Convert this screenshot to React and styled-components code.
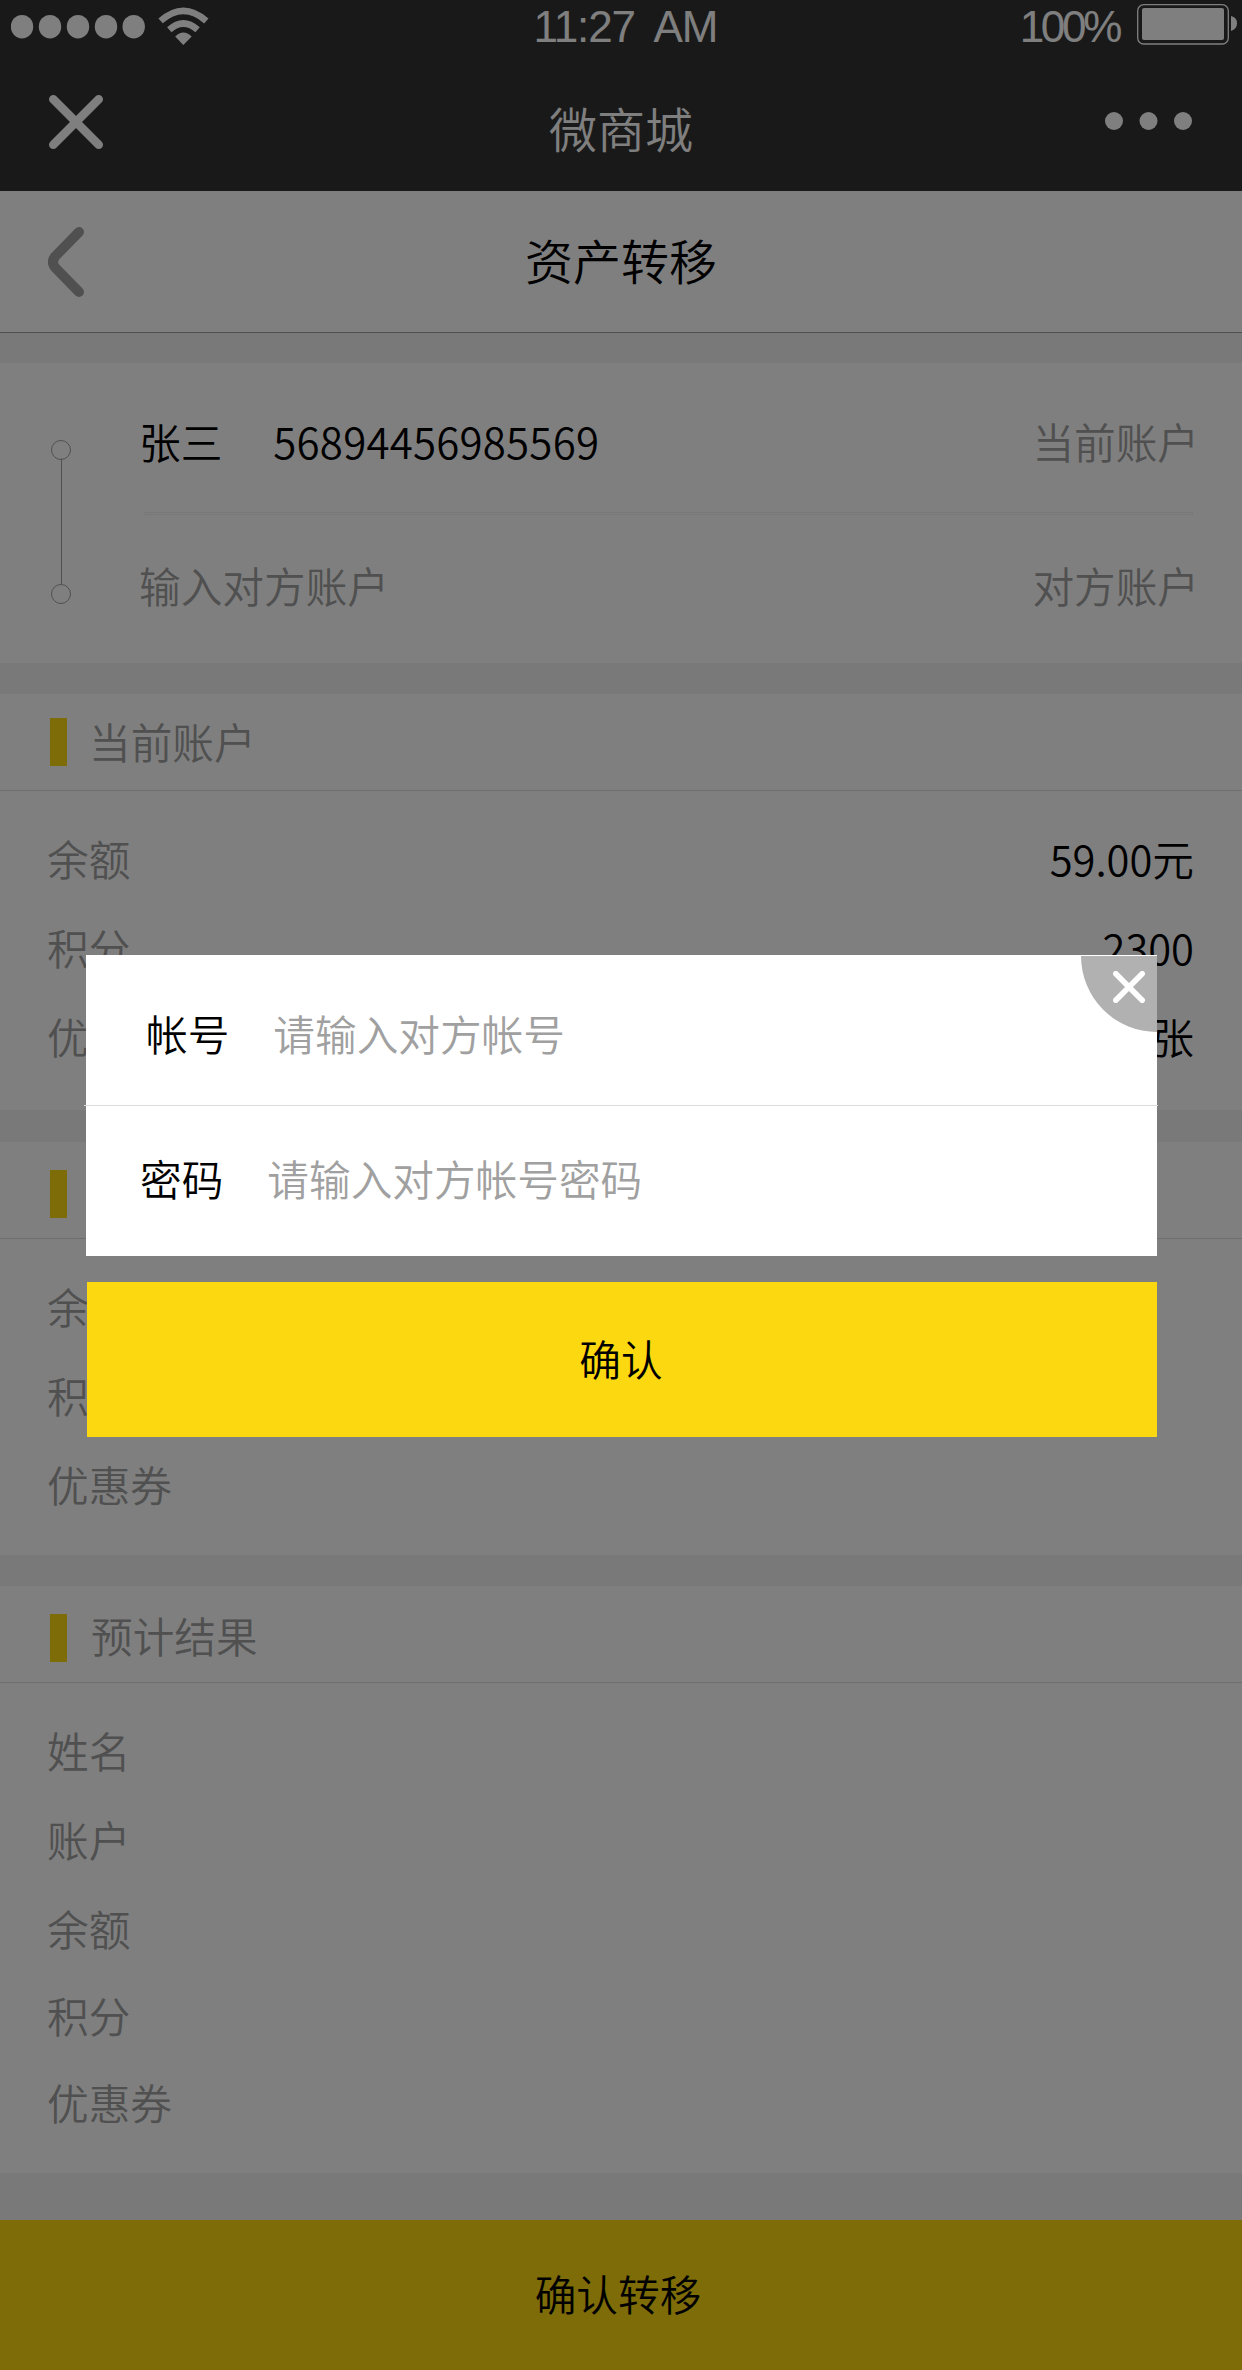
import React from "react";
import styled, { createGlobalStyle } from "styled-components";

const GlobalStyle = createGlobalStyle`
  *, *::before, *::after { box-sizing: border-box; }
  body { margin: 0; background: #f2f2f2; }
  button, input { font: inherit; border: 0; padding: 0; margin: 0; background: none; }
  svg { display: block; }
`;

const Page = styled.div`
  position: relative;
  width: 1242px;
  height: 2370px;
  display: flex;
  flex-direction: column;
  overflow: hidden;
  background: #f2f2f2;
  color: #000;
  font-family: "Noto Sans CJK SC", sans-serif;
  font-size: 41.67px;
  font-weight: 350;
`;

const Header = styled.header`
  height: 191px;
  background: #323232;
  color: #fff;
`;

const StatusBar = styled.div`
  height: 52px;
  display: grid;
  grid-template-columns: 1fr auto 1fr;
  font-family: "Liberation Sans", Arial, sans-serif;
  font-size: 44px;
  font-weight: 400;
  line-height: 54px;
`;

const Signal = styled.div`
  display: flex;
  align-items: flex-start;
  padding: 0 0 0 11px;
`;

const Clock = styled.div`
  padding-left: 9px;
  letter-spacing: -1.1px;
  word-spacing: 10px;
  white-space: nowrap;
`;

const Power = styled.div`
  display: flex;
  justify-content: flex-end;
  padding-right: 5px;
  gap: 18px;
  letter-spacing: -3.3px;
`;

const NavBar = styled.div`
  height: 139px;
  padding: 0 49px;
  display: grid;
  grid-template-columns: 1fr auto 1fr;
  align-items: start;
  font-size: 48px;
  line-height: 151px;
`;

const IconButton = styled.button`
  display: block;
  margin-top: ${(p) => p.$top}px;
  justify-self: ${(p) => (p.$end ? "end" : "start")};
  line-height: 0;
  color: inherit;
`;

const TitleBar = styled.div`
  height: 142px;
  padding: 0 48px;
  display: grid;
  grid-template-columns: 1fr auto 1fr;
  align-items: start;
  background: #fff;
  border-bottom: 1px solid #a0a0a0;
  font-size: 48px;
  line-height: 137px;
`;

const TitleText = styled.h1`
  margin: 0;
  font-size: inherit;
  font-weight: inherit;
`;

const TransferCard = styled.section`
  height: 300px;
  margin-top: 30px;
  padding: 0 43px 0 51px;
  display: flex;
  background: #fff;
`;

const Track = styled.svg`
  margin-top: 77px;
  flex: none;
`;

const Parties = styled.div`
  flex: 1;
  padding-left: 68px;
`;

const Party = styled.div`
  height: ${(p) => (p.$first ? 149 : 148)}px;
  padding-top: ${(p) => (p.$first ? 6 : 0)}px;
  display: flex;
  justify-content: space-between;
  line-height: ${(p) => (p.$first ? 144 : 140)}px;
`;

const PartyRule = styled.div`
  height: 3px;
  margin: 0 6px 0 5px;
  border: 1px solid #f0f0f0;
`;

const Account = styled.span`
  margin-left: 51px;
  font-size: 42px;
  letter-spacing: 0.22px;
`;

const Muted = styled.span`
  color: #a0a0a0;
`;

const Section = styled.section`
  height: ${(p) => p.$height}px;
  margin-top: ${(p) => p.$gap}px;
  background: #fff;
`;

const SectionHead = styled.h2`
  height: 97px;
  margin: 0;
  padding: ${(p) => p.$drop}px 0 0 50px;
  display: flex;
  gap: ${(p) => p.$indent}px;
  border-bottom: 1px solid #dcdcdc;
  font-size: inherit;
  font-weight: inherit;
  line-height: ${(p) => 71 - p.$drop}px;
  color: #a0a0a0;

  &::before {
    content: "";
    width: 17px;
    height: 48px;
    background: #fbd80f;
  }
`;

const Rows = styled.dl`
  margin: 0;
  padding: 23px 48px 0 47px;
`;

const Row = styled.div`
  height: ${(p) => (p.$tight ? 87 : 89)}px;
  display: flex;
  justify-content: space-between;
  line-height: 89px;
`;

const Term = styled.dt`
  color: #a0a0a0;
`;

const Value = styled.dd`
  margin: 0;
`;

const Submit = styled.button`
  height: 150px;
  margin-top: auto;
  padding: 0 6px 4px 0;
  background: #fbd80f;
  color: #000;
`;

const Overlay = styled.div`
  position: absolute;
  inset: 0;
  padding: 955px 85px 0 86px;
  background: rgba(0, 0, 0, 0.5);
`;

const Dialog = styled.div`
  position: relative;
  height: 301px;
  background: #fff;
`;

const Field = styled.label`
  height: 150px;
  padding-left: ${(p) => p.$inset}px;
  display: flex;
  gap: 44px;
  line-height: ${(p) => p.$line}px;
`;

const FieldInput = styled.input`
  flex: 1;
  min-width: 0;
  margin-right: 90px;
  height: ${(p) => p.$line}px;
  outline: none;

  &::placeholder {
    color: #a0a0a0;
    opacity: 1;
  }
`;

const FieldRule = styled.div`
  height: 1px;
  margin: 0 -1px 0 -2px;
  background: #dcdcdc;
`;

const CloseCorner = styled.button`
  position: absolute;
  top: 1px;
  right: 0;
  width: 76px;
  height: 76px;
  padding: 15px 0 0 32px;
  display: flex;
  align-items: flex-start;
  background: #b1b1b1;
  border-bottom-left-radius: 76px;
`;

const Confirm = styled.button`
  display: block;
  width: 1070px;
  height: 155px;
  margin: 26px 0 0 1px;
  padding: 0 2px 4px 0;
  background: #fbd80f;
  color: #000;
`;

const SignalIcon = () => (
  <svg width="200" height="48" viewBox="11 0 200 48" fill="#fff">
    {[22, 50, 78, 106, 133.7].map((x) => (
      <ellipse key={x} cx={x} cy="26.7" rx="11.2" ry="11.8" />
    ))}
    <path d="M183.3 45 L175.2 36.6 Q183.3 28.4 191.7 36.6 Z" />
    <g fill="none" stroke="#fff" strokeWidth="6.6">
      <path d="M169.3 29.8 Q183.3 17.2 197.6 29.8" />
      <path d="M160.6 20.9 Q183.3 .8 206.3 20.9" />
    </g>
  </svg>
);

const BatteryIcon = () => (
  <svg width="100" height="48" viewBox="1137 0 100 48">
    <rect x="1137.7" y="4.7" width="90.6" height="39.3" rx="6" fill="none" stroke="#fff" strokeWidth="1.3" />
    <rect x="1142" y="8" width="82" height="32" rx="2" fill="#fff" />
    <path d="M1231 16 Q1237 17.5 1237 23.3 Q1237 29.2 1231 31 Z" fill="#fff" />
  </svg>
);

const CrossIcon = ({ size, stroke }) => {
  const a = stroke / 2;
  const b = size - a;
  return (
    <svg width={size} height={size} fill="none" stroke="#fff" strokeWidth={stroke} strokeLinecap="round">
      <path d={`M${a} ${a} L${b} ${b} M${b} ${a} L${a} ${b}`} />
    </svg>
  );
};

const MoreIcon = () => (
  <svg width="88" height="18" fill="#fff">
    <circle cx="9" cy="9" r="9" />
    <circle cx="43.5" cy="9" r="9" />
    <circle cx="78" cy="9" r="9" />
  </svg>
);

const BackIcon = () => (
  <svg width="36" height="70" fill="none" stroke="#a0a0a0" strokeWidth="10" strokeLinecap="round">
    <path d="M31 5 L7.5 29 Q2.4 35 7.5 41 L31 65" />
  </svg>
);

const sections = [
  {
    title: "当前账户",
    gap: 31,
    height: 416,
    drop: 24,
    indent: 22,
    rows: [["余额", "59.00元"], ["积分", "2300"], ["优惠券", "张"]],
  },
  {
    title: "",
    gap: 32,
    height: 413,
    drop: 28,
    indent: 24,
    rows: [["余额"], ["积分"], ["优惠券"]],
  },
  {
    title: "预计结果",
    gap: 31,
    height: 587,
    drop: 28,
    indent: 24,
    rows: [["姓名"], ["账户"], ["余额", "", true], ["积分", "", true], ["优惠券"]],
  },
];

export default function App() {
  return (
    <Page>
      <GlobalStyle />
      <Header>
        <StatusBar>
          <Signal><SignalIcon /></Signal>
          <Clock>11:27 AM</Clock>
          <Power>
            <span>100%</span>
            <BatteryIcon />
          </Power>
        </StatusBar>
        <NavBar>
          <IconButton $top={43}><CrossIcon size={54} stroke={8.6} /></IconButton>
          <span>微商城</span>
          <IconButton $top={60} $end><MoreIcon /></IconButton>
        </NavBar>
      </Header>

      <TitleBar>
        <IconButton $top={36}><BackIcon /></IconButton>
        <TitleText>资产转移</TitleText>
      </TitleBar>

      <TransferCard>
        <Track width="20" height="164" fill="none" stroke="#a0a0a0">
          <circle cx="10" cy="10" r="9.5" />
          <path d="M10.5 18.5 V144" />
          <circle cx="10" cy="154" r="9.5" />
        </Track>
        <Parties>
          <Party $first>
            <span>张三<Account>56894456985569</Account></span>
            <Muted>当前账户</Muted>
          </Party>
          <PartyRule />
          <Party>
            <Muted>输入对方账户</Muted>
            <Muted>对方账户</Muted>
          </Party>
        </Parties>
      </TransferCard>

      {sections.map((s, i) => (
        <Section key={i} $gap={s.gap} $height={s.height}>
          <SectionHead $drop={s.drop} $indent={s.indent}>{s.title}</SectionHead>
          <Rows>
            {s.rows.map(([label, value, tight]) => (
              <Row key={label} $tight={tight}>
                <Term>{label}</Term>
                {value && <Value>{value}</Value>}
              </Row>
            ))}
          </Rows>
        </Section>
      ))}

      <Submit>确认转移</Submit>

      <Overlay>
        <Dialog>
          <Field $inset={60} $line={157}>
            帐号
            <FieldInput $line={157} placeholder="请输入对方帐号" />
          </Field>
          <FieldRule />
          <Field $inset={54} $line={145}>
            密码
            <FieldInput $line={145} placeholder="请输入对方帐号密码" />
          </Field>
          <CloseCorner><CrossIcon size={32} stroke={5.6} /></CloseCorner>
        </Dialog>
        <Confirm>确认</Confirm>
      </Overlay>
    </Page>
  );
}
